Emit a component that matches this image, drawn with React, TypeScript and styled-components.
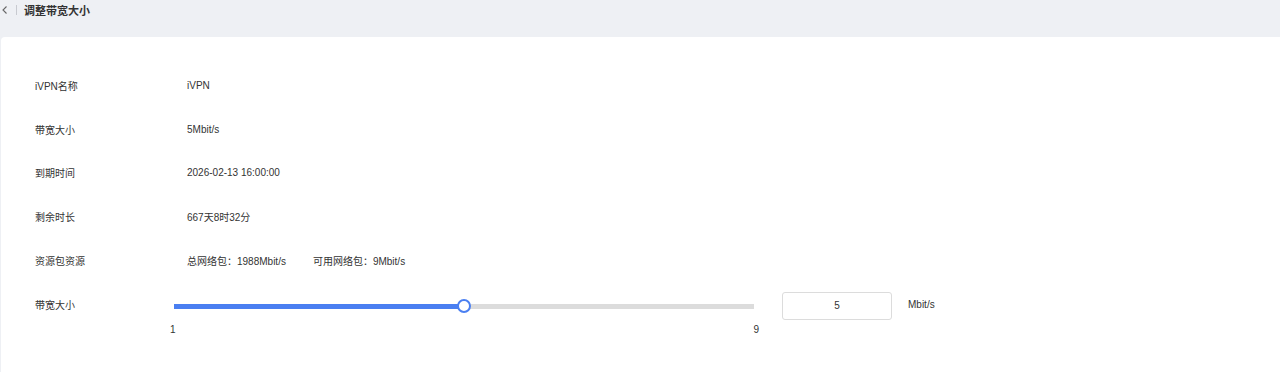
import styled, { createGlobalStyle } from 'styled-components';

const GlobalStyle = createGlobalStyle`
  html, body {
    margin: 0;
    padding: 0;
    background: #eef0f4;
  }

  body {
    font-family: "Liberation Sans", "Noto Sans CJK SC", sans-serif;
    font-size: 10px;
    color: #333;
  }
`;

type InfoItem = {
  label: string;
  value: React.ReactNode;
};

const MIN = 1;
const MAX = 9;
const VALUE = 5;

export default function App() {
  const items: InfoItem[] = [
    { label: 'iVPN名称', value: 'iVPN' },
    { label: '带宽大小', value: '5Mbit/s' },
    { label: '到期时间', value: '2026-02-13 16:00:00' },
    { label: '剩余时长', value: '667天8时32分' },
    {
      label: '资源包资源',
      value: (
        <>
          <span>总网络包：1988Mbit/s</span>
          <span>可用网络包：9Mbit/s</span>
        </>
      ),
    },
  ];

  const percent = ((VALUE - MIN) / (MAX - MIN)) * 100;

  return (
    <Page>
      <GlobalStyle />
      <Header>
        <BackButton aria-label="返回">
          <svg width="8" height="10" viewBox="0 0 8 10" fill="none">
            <path d="M5.5 1.5L2 5l3.5 3.5" stroke="#666" strokeWidth="1.1" />
          </svg>
        </BackButton>
        <Divider />
        <Title>调整带宽大小</Title>
      </Header>

      <Card>
        {items.map((item) => (
          <Row key={item.label}>
            <Label>{item.label}</Label>
            <Value>{item.value}</Value>
          </Row>
        ))}

        <SliderRow>
          <Label>带宽大小</Label>
          <SliderBlock>
            <Track>
              <Fill style={{ width: `${percent}%` }} />
              <Thumb style={{ left: `${percent}%` }} />
            </Track>
            <Marks>
              <span>{MIN}</span>
              <span>{MAX}</span>
            </Marks>
          </SliderBlock>
          <NumberInput value={VALUE} readOnly />
          <Unit>Mbit/s</Unit>
        </SliderRow>
      </Card>
    </Page>
  );
}

const Page = styled.div`
  display: flex;
  flex-direction: column;
  height: 100vh;
  overflow: hidden;
`;

const Header = styled.div`
  display: flex;
  align-items: center;
  height: 19px;
  padding: 0 0 18px 1px;
`;

const BackButton = styled.button`
  display: flex;
  align-items: center;
  justify-content: flex-start;
  width: 10px;
  height: 12px;
  padding: 0;
  border: 0;
  background: none;
  cursor: pointer;
`;

const Divider = styled.span`
  width: 1px;
  height: 10px;
  margin: 0 7px 0 5px;
  background: #c8cad0;
`;

const Title = styled.h1`
  margin: 0;
  font-size: 11px;
  font-weight: 700;
  color: #333;
`;

const Card = styled.div`
  flex: 1;
  display: flex;
  flex-direction: column;
  margin-left: 1px;
  padding: 26.5px 0 0 34px;
  background: #fff;
  border-top-left-radius: 4px;
`;

const Row = styled.div`
  display: flex;
  align-items: center;
  height: 43.75px;
`;

const Label = styled.div`
  width: 139px;
  flex-shrink: 0;
  color: #333;
`;

const Value = styled.div`
  display: flex;
  gap: 27px;
  padding-left: 13px;
  color: #333;
`;

const SliderRow = styled.div`
  display: flex;
  align-items: flex-start;
  margin-top: 14.5px;
`;

const SliderBlock = styled.div`
  width: 580px;
  padding-top: 7px;
`;

const Track = styled.div`
  position: relative;
  height: 5px;
  background: #dcdcdc;
`;

const Fill = styled.div`
  height: 100%;
  background: #4a7ff1;
`;

const Thumb = styled.span`
  position: absolute;
  top: 50%;
  width: 10px;
  height: 10px;
  border: 2px solid #4a7ff1;
  border-radius: 50%;
  background: #fff;
  transform: translate(-50%, -50%);
`;

const Marks = styled.div`
  display: flex;
  justify-content: space-between;
  margin: 15px -5px 0 -4px;
  color: #333;
`;

const NumberInput = styled.input`
  box-sizing: border-box;
  width: 110px;
  height: 28px;
  margin: -5px 0 0 28px;
  padding: 0;
  border: 1px solid #dcdcdc;
  border-radius: 3px;
  text-align: center;
  font-family: inherit;
  font-size: 10px;
  color: #333;
  outline: none;
`;

const Unit = styled.span`
  margin: 2px 0 0 16px;
  color: #333;
`;
